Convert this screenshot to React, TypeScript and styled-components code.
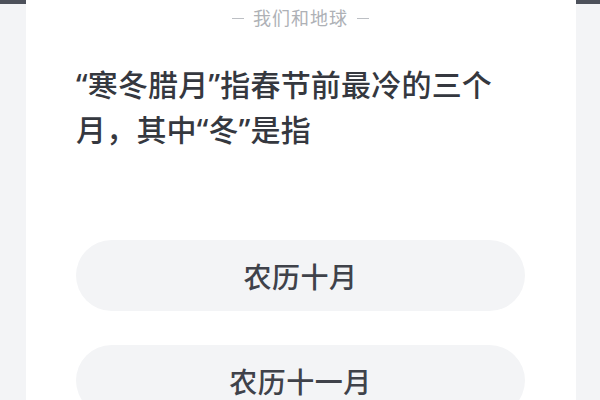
import styled, { createGlobalStyle } from "styled-components";

const GlobalStyle = createGlobalStyle`
  html, body {
    margin: 0;
    padding: 0;
    width: 600px;
    height: 400px;
    overflow: hidden;
  }
  body {
    font-family: "Noto Sans", "Noto Sans CJK SC", sans-serif;
  }
`;

const options = ["农历十月", "农历十一月"];

const App = () => {
  return (
    <>
      <GlobalStyle />
      <Page>
        <Side />
        <Card>
          <Brand>
            <Dash />
            我们和地球
            <Dash />
          </Brand>
          <Question>“寒冬腊月”指春节前最冷的三个月，其中“冬”是指</Question>
          <Options>
            {options.map((o) => (
              <Option key={o}>{o}</Option>
            ))}
          </Options>
        </Card>
        <Side />
      </Page>
    </>
  );
};

const Page = styled.div`
  width: 600px;
  height: 400px;
  display: grid;
  grid-template-columns: 26px 1fr 24px;
  background: #f3f4f6;
  overflow: hidden;
`;

const Side = styled.div`
  border-top: 4px solid #4d515b;
`;

const Card = styled.div`
  background: #ffffff;
  padding: 0 51px 0 50px;
  display: flex;
  flex-direction: column;
`;

const Brand = styled.div`
  display: flex;
  align-items: center;
  justify-content: center;
  gap: 9px;
  margin-top: 6px;
  font-size: 18px;
  line-height: 24px;
  color: #aeb1b6;
  letter-spacing: 1px;
`;

const Dash = styled.span`
  width: 12px;
  height: 1px;
  background: #bcbfc4;
`;

const Question = styled.div`
  margin-top: 32px;
  font-size: 30px;
  line-height: 45px;
  font-weight: 500;
  color: #35383f;
  width: 430px;
  letter-spacing: 0.2px;
`;

const Options = styled.div`
  margin-top: 88px;
  display: flex;
  flex-direction: column;
  gap: 34px;
`;

const Option = styled.div`
  height: 71px;
  border-radius: 36px;
  background: #f3f4f6;
  display: flex;
  align-items: center;
  justify-content: center;
  font-size: 28px;
  font-weight: 500;
  letter-spacing: 0.5px;
  color: #3f424a;
`;

export default App;
